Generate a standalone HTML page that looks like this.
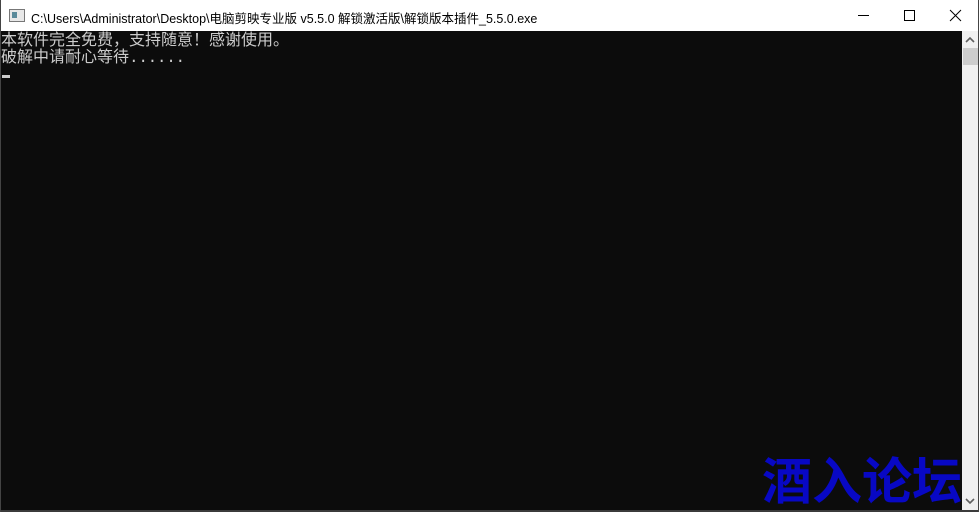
<!DOCTYPE html>
<html><head><meta charset="utf-8"><style>
body{margin:0;width:979px;height:512px;overflow:hidden;background:#fff;position:relative;font-family:"Liberation Sans","Noto Sans CJK SC",sans-serif}
.title{position:absolute;left:0;top:0;width:979px;height:31px;background:#fff}
.ttext{position:absolute;left:31px;top:8px;font-size:12.5px;color:#000;white-space:nowrap}
.icon{position:absolute;left:9px;top:9px;width:14px;height:11px;border:1px solid #777;background:#e8e8e8}
.icon:before{content:"";position:absolute;left:2px;top:2px;width:5px;height:6px;background:#5a8a9a}
.con{position:absolute;left:1px;top:31px;width:961px;height:479px;background:#0c0c0c;color:#ccc;font-family:"Liberation Mono","Noto Sans CJK SC",monospace;font-size:16px;line-height:17px}
.con div{white-space:pre}
.dots{letter-spacing:-0.3px}
.sb{position:absolute;left:962px;top:31px;width:16px;height:479px;background:#f0f0f0}
.thumb{position:absolute;left:1px;top:17px;width:15px;height:17px;background:#cdcdcd}
.wm{position:absolute;left:762px;top:446px;font-size:50px;font-weight:bold;color:#0808c4;font-family:"Noto Sans CJK SC",sans-serif;line-height:64px}
</style></head><body>
<div class="title">
<div class="icon"></div>
<div class="ttext">C:\Users\Administrator\Desktop\电脑剪映专业版 v5.5.0 解锁激活版\解锁版本插件_5.5.0.exe</div>
<svg style="position:absolute;left:850px;top:0" width="129" height="31">
<line x1="8" y1="15.5" x2="19" y2="15.5" stroke="#000"/>
<rect x="54.5" y="10.5" width="10" height="10" fill="none" stroke="#000"/>
<path d="M100 10 L111 21 M111 10 L100 21" stroke="#000"/>
</svg>
</div>
<div class="con">
<div style="margin-top:2px">本软件完全免费，支持随意！感谢使用。</div>
<div>破解中请耐心等待<span class="dots">......</span></div>
<div style="position:absolute;left:1px;top:44px;width:8px;height:3px;background:#ccc"></div>
</div>
<div class="sb"><svg width="16" height="17"><path d="M4 11 L8 7 L12 11" stroke="#606060" stroke-width="1.6" fill="none"/></svg><div class="thumb"></div>
<svg style="position:absolute;left:0;bottom:0" width="16" height="17"><path d="M4 6 L8 10 L12 6" stroke="#606060" stroke-width="1.6" fill="none"/></svg></div>
<div class="wm">酒入论坛</div>
<div style="position:absolute;left:0;top:510px;width:979px;height:2px;background:#3b3b3b"></div>
<div style="position:absolute;left:0;top:0;width:1px;height:512px;background:#444"></div>
<div style="position:absolute;right:0;top:0;width:1px;height:512px;background:#444"></div>
</body></html>
